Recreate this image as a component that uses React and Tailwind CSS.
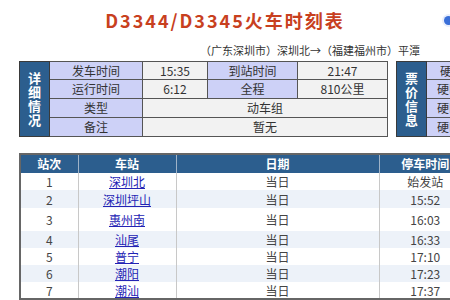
import React from 'react';

const info = [
  ['发车时间', '15:35', '到站时间', '21:47', 'h-[18px]'],
  ['运行时间', '6:12', '全程', '810公里', 'h-[19px]'],
];

const stops = [
  ['1', '深圳北', '当日', '始发站', 'h-[17px]'],
  ['2', '深圳坪山', '当日', '15:52', 'h-[18px]'],
  ['3', '惠州南', '当日', '16:03', 'h-[23px]'],
  ['4', '汕尾', '当日', '16:33', 'h-[17px]'],
  ['5', '普宁', '当日', '17:10', 'h-[17px]'],
  ['6', '潮阳', '当日', '17:23', 'h-[17px]'],
  ['7', '潮汕', '当日', '17:37', 'h-[17px]'],
];

const prices = [
  ['硬座', 'pl-[13px]'],
  ['硬卧', 'pl-[10px]'],
  ['硬卧', 'pl-[10px]'],
  ['硬卧', 'pl-[10px]'],
];

const App = () => {
  return (
    <div
      className="relative w-[450px] h-[300px] overflow-hidden bg-white text-[#333]"
      style={{ fontFamily: '"Noto Sans CJK SC", "Noto Sans", sans-serif' }}
    >
      {/* 标题 */}
      <h1 className="pt-[8px] h-[40px] text-center text-[18px] font-bold tracking-[2px] text-[#c8401e] leading-[24px]">
        D3344/D3345火车时刻表
      </h1>
      <div className="absolute top-[16px] left-[444px] w-[9px] h-[9px] rounded-full bg-[#3a6fd8] ring-2 ring-[#e8eefc]" />

      <p className="text-right pr-[30px] text-[11px] leading-[16px] h-[21px] pt-[2px] text-[#333]">
        （广东深圳市）深圳北→（福建福州市）平潭
      </p>

      {/* 详细情况 + 票价信息 */}
      <div className="flex pl-[19px] gap-[8px] w-[600px]">
        <table className="table-fixed border-collapse text-[12px] text-center w-[368px] shrink-0">
          <colgroup>
            <col className="w-[30px]" />
            <col className="w-[93px]" />
            <col className="w-[65px]" />
            <col className="w-[90px]" />
            <col className="w-[90px]" />
          </colgroup>
          <tbody>
            {info.map((r, i) => (
              <tr key={i} className={`${r[4]} leading-[16px]`}>
                {i === 0 && (
                  <th
                    rowSpan={4}
                    className="bg-[#2c5e8e] text-white text-[13px] font-bold leading-[14px] border border-[#3a3a3a] px-[6px]"
                  >
                    详细情况
                  </th>
                )}
                <td className="bg-[#cdd1f7] border border-[#555]">{r[0]}</td>
                <td className="bg-[#f2f2f2] border border-[#555]">{r[1]}</td>
                <td className="bg-[#cdd1f7] border border-[#555]">{r[2]}</td>
                <td className="bg-[#f2f2f2] border border-[#555]">{r[3]}</td>
              </tr>
            ))}
            <tr className="h-[19px] leading-[16px]">
              <td className="bg-[#cdd1f7] border border-[#555]">类型</td>
              <td colSpan={3} className="bg-[#f2f2f2] border border-[#555]">动车组</td>
            </tr>
            <tr className="h-[19px] leading-[16px]">
              <td className="bg-[#cdd1f7] border border-[#555]">备注</td>
              <td colSpan={3} className="bg-[#f2f2f2] border border-[#555]">暂无</td>
            </tr>
          </tbody>
        </table>

        <table className="table-fixed border-collapse text-[12px] text-center w-[110px] shrink-0">
          <colgroup>
            <col className="w-[30px]" />
            <col className="w-[80px]" />
          </colgroup>
          <tbody>
            {prices.map((p, i) => (
              <tr key={i} className={`${i === 0 ? 'h-[18px]' : 'h-[19px]'} leading-[16px]`}>
                {i === 0 && (
                  <th
                    rowSpan={4}
                    className="bg-[#2c5e8e] text-white text-[13px] font-bold leading-[14px] border border-[#3a3a3a] px-[6px]"
                  >
                    票价信息
                  </th>
                )}
                <td className={`bg-[#cdd1f7] border border-[#555] text-left ${p[1]}`}>{p[0]}</td>
              </tr>
            ))}
          </tbody>
        </table>
      </div>

      {/* 停靠站 */}
      <div className="pl-[19px] pt-[16px] w-[600px]">
        <table className="table-fixed border-collapse text-[12px] text-center w-[452px] border-2 border-[#666]">
          <colgroup>
            <col className="w-[58px]" />
            <col className="w-[98px]" />
            <col className="w-[203px]" />
            <col className="w-[93px]" />
          </colgroup>
          <thead>
            <tr className="h-[19px] bg-[#2c5e8e] text-white font-bold leading-[16px]">
              <th className="border-r border-[#9fb3c8]">站次</th>
              <th className="border-r border-[#9fb3c8]">车站</th>
              <th className="border-r border-[#9fb3c8]">日期</th>
              <th>停车时间</th>
            </tr>
          </thead>
          <tbody>
            {stops.map((s, i) => (
              <tr key={s[0]} className={`${s[4]} leading-[15px] ${i % 2 === 1 ? 'bg-[#edf2f9]' : 'bg-white'}`}>
                <td className="border-r border-[#c8c8c8] text-[#444]">{s[0]}</td>
                <td className="border-r border-[#c8c8c8]">
                  <a href="#" className="text-[#2323b4] underline">{s[1]}</a>
                </td>
                <td className="border-r border-[#c8c8c8] text-[#444]">{s[2]}</td>
                <td className="text-[#444]">{s[3]}</td>
              </tr>
            ))}
          </tbody>
        </table>
      </div>
    </div>
  );
};

export default App;
